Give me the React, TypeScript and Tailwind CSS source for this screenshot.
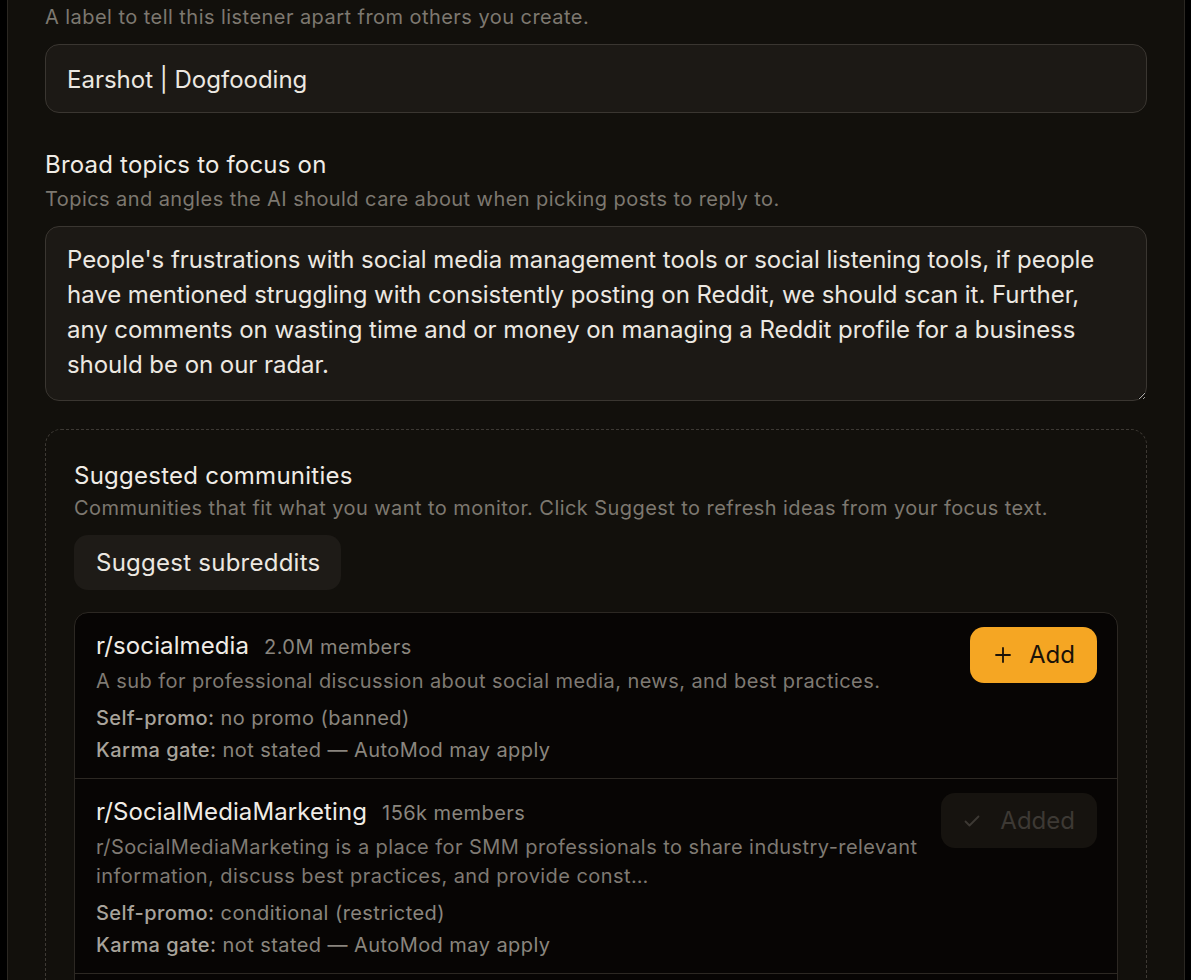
import React from "react";

const FONT = { fontFamily: 'Inter, "Noto Sans", "Liberation Sans", sans-serif' };

function PlusIcon() {
  return (
    <svg width="16" height="16" viewBox="0 0 16 16" fill="none" stroke="currentColor" strokeWidth="1.8" strokeLinecap="round">
      <path d="M8 1v14M1 8h14" />
    </svg>
  );
}

function CheckIcon() {
  return (
    <svg width="16" height="16" viewBox="0 0 16 16" fill="none" stroke="currentColor" strokeWidth="1.8" strokeLinecap="round" strokeLinejoin="round">
      <path d="M1.5 8.5l4 4 9-9" />
    </svg>
  );
}

type Sub = {
  name: string;
  members: string;
  desc: string;
  promo: string;
  karma: string;
  added: boolean;
};

const subs: Sub[] = [
  {
    name: "r/socialmedia",
    members: "2.0M members",
    desc: "A sub for professional discussion about social media, news, and best practices.",
    promo: "no promo (banned)",
    karma: "not stated — AutoMod may apply",
    added: false,
  },
  {
    name: "r/SocialMediaMarketing",
    members: "156k members",
    desc: "r/SocialMediaMarketing is a place for SMM professionals to share industry-relevant information, discuss best practices, and provide const…",
    promo: "conditional (restricted)",
    karma: "not stated — AutoMod may apply",
    added: true,
  },
  {
    name: "r/marketing",
    members: "1.1M members",
    desc: "Discussion of marketing.",
    promo: "no promo (banned)",
    karma: "not stated — AutoMod may apply",
    added: false,
  },
];

function Row({ s, last }: { s: Sub; last: boolean }) {
  return (
    <div className={`flex items-start gap-[20px] pl-[21px] pr-[20px] pt-[14px] pb-[13px] ${last ? "" : "border-b border-[#2c2823]"}`}>
      <div className="flex-1 min-w-0 pt-[5px]">
        <div className="flex items-baseline gap-[15px]">
          <span className="text-[24px] leading-[28px] tracking-[0.1px] text-[#f0ece6]">{s.name}</span>
          <span className="text-[20px] leading-[28px] tracking-[0.43px] text-[#8a857e]">{s.members}</span>
        </div>
        <p className="mt-[6px] text-[20px] leading-[29px] tracking-[0.43px] text-[#7f7a73]">{s.desc}</p>
        <div className="mt-[8px] text-[20px] leading-[29px] tracking-[0.43px]">
          <span className="font-medium text-[#a8a39b]">Self-promo:</span>{" "}
          <span className="text-[#8a857e]">{s.promo}</span>
        </div>
        <div className="mt-[3px] text-[20px] leading-[29px] tracking-[0.43px]">
          <span className="font-medium text-[#a8a39b]">Karma gate:</span>{" "}
          <span className="text-[#8a857e]">{s.karma}</span>
        </div>
      </div>
      {s.added ? (
        <button className="flex items-center gap-[20px] h-[55px] pl-[23px] pr-[22px] rounded-[14px] bg-[#16130f] text-[#3d3934] text-[24px] shrink-0">
          <CheckIcon />
          <span>Added</span>
        </button>
      ) : (
        <button className="flex items-center gap-[18px] h-[56px] pl-[25px] pr-[22px] rounded-[14px] bg-[#f5a623] text-[#1a1208] text-[24px] shrink-0">
          <PlusIcon />
          <span>Add</span>
        </button>
      )}
    </div>
  );
}

export default function App() {
  return (
    <div className="min-h-[980px] bg-black" style={FONT}>
      <div className="ml-[7px] mr-[6px] min-h-[980px] border-x border-[#2a2722] bg-[#12100c] px-[37px] pt-[4px] overflow-hidden">
        <p className="text-[20px] leading-[27px] tracking-[0.45px] text-[#7d7870] whitespace-nowrap">
          A label to tell this listener apart from others you create.
        </p>
        <div className="mt-[13px] h-[69px] flex items-center pt-[2px] rounded-[14px] border border-[#3a3631] bg-[#1c1915] px-[21px] text-[24px] text-[#ece8e1]">
          Earshot | Dogfooding
        </div>

        <h3 className="mt-[37px] text-[24px] leading-[30px] tracking-[0.2px] text-[#f0ece6]">Broad topics to focus on</h3>
        <p className="mt-[6px] text-[20px] leading-[27px] tracking-[0.43px] text-[#7d7870] whitespace-nowrap">
          Topics and angles the AI should care about when picking posts to reply to.
        </p>
        <textarea
          className="mt-[13px] block w-full h-[175px] rounded-[14px] border border-[#3a3631] bg-[#1c1915] px-[21px] pt-[15px] text-[24px] leading-[35px] tracking-[-0.05px] text-[#ece8e1] outline-none resize-y"
          style={FONT}
          defaultValue={
            "People's frustrations with social media management tools or social listening tools, if people have mentioned struggling with consistently posting on Reddit, we should scan it. Further, any comments on wasting time and or money on managing a Reddit profile for a business should be on our radar."
          }
        />

        <div className="mt-[28px] rounded-[16px] border border-dashed border-[#3d3934] px-[28px] pt-[31px] pb-[28px]">
          <h3 className="text-[24px] leading-[30px] tracking-[0.25px] text-[#f0ece6]">Suggested communities</h3>
          <p className="mt-[4px] text-[20px] leading-[27px] tracking-[0.43px] text-[#7d7870] whitespace-nowrap">
            Communities that fit what you want to monitor. Click Suggest to refresh ideas from your focus text.
          </p>
          <button className="mt-[13px] h-[55px] pl-[22px] pr-[21px] rounded-[14px] bg-[#1e1b17] text-[24px] tracking-[0.25px] text-[#ece8e1]">
            Suggest subreddits
          </button>
          <div className="mt-[22px] rounded-[14px] border border-[#2c2823] bg-[#070504] overflow-hidden">
            {subs.map((s, i) => (
              <Row key={s.name} s={s} last={i === subs.length - 1} />
            ))}
          </div>
        </div>
      </div>
    </div>
  );
}
